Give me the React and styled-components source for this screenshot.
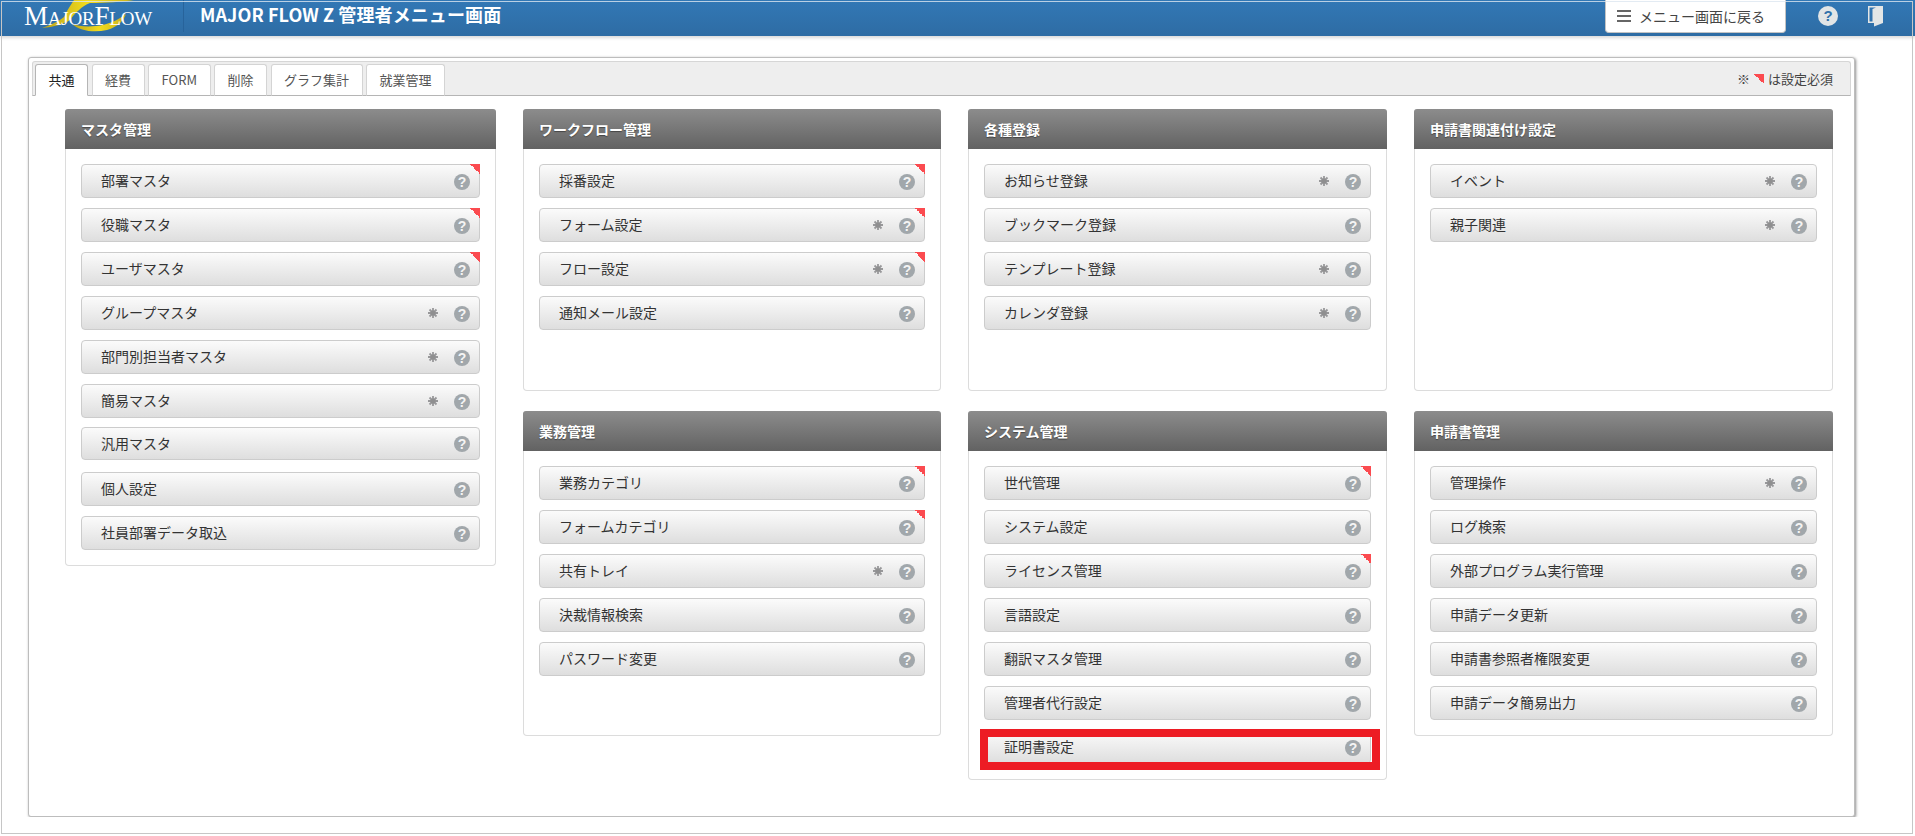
import React from "react";
import styled, { createGlobalStyle } from "styled-components";

const FONT = `"Noto Sans CJK JP", "Noto Sans", sans-serif`;

const columns = [
  [
    {
      title: "マスタ管理",
      items: [
        { name: "部署マスタ", required: true },
        { name: "役職マスタ", required: true },
        { name: "ユーザマスタ", required: true },
        { name: "グループマスタ", star: true },
        { name: "部門別担当者マスタ", star: true },
        { name: "簡易マスタ", star: true },
        { name: "汎用マスタ", tight: true },
        { name: "個人設定" },
        { name: "社員部署データ取込" },
      ],
    },
  ],
  [
    {
      title: "ワークフロー管理",
      minHeight: 282,
      items: [
        { name: "採番設定", required: true },
        { name: "フォーム設定", required: true, star: true },
        { name: "フロー設定", required: true, star: true },
        { name: "通知メール設定" },
      ],
    },
    {
      title: "業務管理",
      minHeight: 325,
      items: [
        { name: "業務カテゴリ", required: true },
        { name: "フォームカテゴリ", required: true },
        { name: "共有トレイ", star: true },
        { name: "決裁情報検索" },
        { name: "パスワード変更" },
      ],
    },
  ],
  [
    {
      title: "各種登録",
      minHeight: 282,
      items: [
        { name: "お知らせ登録", star: true },
        { name: "ブックマーク登録" },
        { name: "テンプレート登録", star: true },
        { name: "カレンダ登録", star: true },
      ],
    },
    {
      title: "システム管理",
      items: [
        { name: "世代管理", required: true },
        { name: "システム設定" },
        { name: "ライセンス管理", required: true },
        { name: "言語設定" },
        { name: "翻訳マスタ管理" },
        { name: "管理者代行設定" },
        { name: "証明書設定", marked: true },
      ],
    },
  ],
  [
    {
      title: "申請書関連付け設定",
      minHeight: 282,
      items: [
        { name: "イベント", star: true },
        { name: "親子関連", star: true },
      ],
    },
    {
      title: "申請書管理",
      items: [
        { name: "管理操作", star: true },
        { name: "ログ検索" },
        { name: "外部プログラム実行管理" },
        { name: "申請データ更新" },
        { name: "申請書参照者権限変更" },
        { name: "申請データ簡易出力" },
      ],
    },
  ],
];

const tabs = ["共通", "経費", "FORM", "削除", "グラフ集計", "就業管理"];

const Logo = () => (
  <LogoWrap>
    <svg width="130" height="36" viewBox="0 0 130 36">
      <defs>
        <linearGradient id="gold" x1="0" y1="0" x2="1" y2="0">
          <stop offset="0" stopColor="#b9a21a" />
          <stop offset="0.5" stopColor="#f2dc1e" />
          <stop offset="1" stopColor="#c9b01c" />
        </linearGradient>
      </defs>
      <path
        d="M52 0 C48 6 44 12 42 17 C36 22 28 25 20 28 C32 27 42 24 48 20 C52 14 60 6 68 3 C84 3 100 2 112 0 Z"
        fill="url(#gold)"
      />
      <path d="M50 24 C58 31 72 33 85 30 C96 27 102 20 104 14 C96 20 86 25 74 26 C64 27 56 26 50 24 Z" fill="url(#gold)" />
    </svg>
    <LogoText>Major<span>Flow</span></LogoText>
  </LogoWrap>
);

const DoorIcon = () => (
  <svg width="15" height="21" viewBox="0 0 15 21">
    <path d="M0 0 H15 V17 L6 20.5 V17 H0 Z M1.5 1.5 V15.5 H4.5 V3 L8 1.5 Z" fill="#e3e6e6" fillRule="evenodd" />
  </svg>
);

const StarIcon = () => (
  <svg width="10" height="10" viewBox="0 0 10 10">
    <g stroke="#98989a" strokeWidth="1.8">
      <path d="M5 0 V10 M0 5 H10 M1.5 1.5 L8.5 8.5 M8.5 1.5 L1.5 8.5" />
    </g>
    <circle cx="5" cy="5" r="2.6" fill="#8f8f90" />
  </svg>
);

const MenuButton = ({ name, required, star, marked, tight }) => (
  <ButtonRow $marked={marked} $tight={tight}>
    <span className="label">{name}</span>
    {star && <StarIcon />}
    <HelpMark>?</HelpMark>
    {required && <Corner />}
  </ButtonRow>
);

const App = () => (
  <>
    <GlobalStyle />
    <TopBar>
      <Logo />
      <Title>MAJOR FLOW Z 管理者メニュー画面</Title>
      <BackButton>
        <Burger />
        メニュー画面に戻る
      </BackButton>
      <TopHelp>?</TopHelp>
      <DoorWrap>
        <DoorIcon />
      </DoorWrap>
    </TopBar>
    <Card>
      <TabBar>
        {tabs.map((tab, i) => (
          <Tab key={tab} $active={i === 0}>
            {tab}
          </Tab>
        ))}
        <Note>
          ※<NoteCorner />は設定必須
        </Note>
      </TabBar>
      <Columns>
        {columns.map((panels, i) => (
          <Column key={i}>
            {panels.map((panel) => (
              <Panel key={panel.title} $minHeight={panel.minHeight}>
                <PanelHead>{panel.title}</PanelHead>
                <PanelBody>
                  {panel.items.map((item) => (
                    <MenuButton key={item.name} {...item} />
                  ))}
                </PanelBody>
              </Panel>
            ))}
          </Column>
        ))}
      </Columns>
    </Card>
    <PageFrame />
  </>
);

const GlobalStyle = createGlobalStyle`
  html, body {
    margin: 0;
    padding: 0;
    background: #fff;
    font-family: ${FONT};
    color: #333;
  }
  * {
    box-sizing: border-box;
  }
`;

const PageFrame = styled.div`
  position: absolute;
  top: 1px;
  left: 1px;
  width: 1912px;
  height: 833px;
  border: 1px solid #c6c6c6;
  border-top-color: rgba(220, 230, 240, 0.8);
  pointer-events: none;
`;

const TopBar = styled.header`
  display: flex;
  align-items: flex-start;
  height: 36px;
  background: linear-gradient(#3278b6, #2e6ca4);
  box-shadow: 0 2px 3px rgba(0, 0, 0, 0.15);
`;

const LogoWrap = styled.div`
  position: relative;
  width: 184px;
  height: 32px;
  padding: 1px 0 0 24px;
  border-right: 1px solid #27639b;
  svg {
    position: absolute;
    top: 0;
    left: 22px;
  }
`;

const LogoText = styled.div`
  position: relative;
  font-family: "Liberation Serif", serif;
  font-variant: small-caps;
  font-size: 27px;
  line-height: 30px;
  letter-spacing: -0.2px;
  color: #fff;
  white-space: nowrap;
`;

const Title = styled.h1`
  margin: 0 0 0 16px;
  font-size: 18px;
  font-weight: 700;
  line-height: 28px;
  letter-spacing: 0.1px;
  color: #fff;
  white-space: nowrap;
`;

const BackButton = styled.div`
  display: flex;
  align-items: center;
  gap: 8px;
  width: 181px;
  height: 33px;
  margin-left: auto;
  padding-left: 11px;
  background: #fff;
  border: 1px solid #c3c3c3;
  border-top: none;
  border-radius: 0 0 4px 4px;
  font-size: 14px;
  color: #444;
`;

const Burger = styled.span`
  width: 14px;
  height: 12px;
  border-top: 2px solid #666;
  border-bottom: 2px solid #666;
  position: relative;
  &::after {
    content: "";
    position: absolute;
    left: 0;
    right: 0;
    top: 3px;
    height: 2px;
    background: #666;
  }
`;

const TopHelp = styled.div`
  width: 20px;
  height: 20px;
  margin: 6px 0 0 32px;
  border-radius: 50%;
  background: #e2e5e6;
  color: #3272ac;
  font-family: "Liberation Sans", sans-serif;
  font-size: 15px;
  font-weight: 700;
  line-height: 20px;
  text-align: center;
`;

const DoorWrap = styled.div`
  width: 15px;
  height: 21px;
  margin: 6px 32px 0 30px;
`;

const Card = styled.main`
  width: 1827px;
  height: 760px;
  margin: 21px 0 0 28px;
  padding: 3px;
  background: #fff;
  border: 1px solid #bdbdbd;
  border-radius: 3px;
  box-shadow: 1px 1px 3px rgba(0, 0, 0, 0.45);
`;

const TabBar = styled.nav`
  display: flex;
  align-items: flex-end;
  gap: 3.5px;
  height: 35px;
  padding-left: 2px;
  background: #eeeeee;
  border: 1px solid #d6d6d6;
  border-bottom-color: #b5b5b5;
  border-radius: 3px 3px 0 0;
`;

const Tab = styled.div`
  position: relative;
  top: 1px;
  height: 32px;
  padding: 0 12.5px;
  background: #fff;
  border: 1px solid ${(p) => (p.$active ? "#b5b5b5" : "#d4d4d4")};
  border-bottom-color: ${(p) => (p.$active ? "#fff" : "#b5b5b5")};
  border-radius: 3px 3px 0 0;
  font-size: 13px;
  line-height: 30px;
  color: ${(p) => (p.$active ? "#222" : "#555")};
`;

const Note = styled.div`
  display: flex;
  align-items: center;
  align-self: center;
  margin-left: auto;
  padding-right: 17px;
  font-size: 13px;
  color: #444;
`;

const NoteCorner = styled.span`
  width: 10px;
  height: 10px;
  margin: 0 4px 0 4px;
  background: linear-gradient(to top right, transparent 50%, #fb4b50 50%);
`;

const Columns = styled.section`
  display: grid;
  grid-template-columns: 431px 418px 419px 419px;
  column-gap: 27px;
  align-items: start;
  padding: 13px 0 0 33px;
`;

const Column = styled.div`
  display: flex;
  flex-direction: column;
  gap: 20px;
`;

const Panel = styled.article`
  min-height: ${(p) => (p.$minHeight ? `${p.$minHeight}px` : "0")};
  background: #fff;
  border: 1px solid #dcdcdc;
  border-top: none;
  border-radius: 4px;
`;

const PanelHead = styled.h2`
  height: 40px;
  margin: 0 -1px;
  padding-left: 16px;
  background: linear-gradient(#8c8c8c, #626262);
  border-radius: 3px 3px 0 0;
  font-size: 14px;
  font-weight: 700;
  line-height: 40px;
  color: #fff;
  text-shadow: 0 1px 1px rgba(0, 0, 0, 0.4);
`;

const PanelBody = styled.div`
  display: flex;
  flex-direction: column;
  gap: 10px;
  padding: 15px;
`;

const ButtonRow = styled.div`
  position: relative;
  display: flex;
  align-items: center;
  gap: 16px;
  height: ${(p) => (p.$tight ? "33px" : "34px")};
  margin: ${(p) => (p.$tight ? "-1px 0 2px" : "0")};
  padding: 0 9px 0 19px;
  background: linear-gradient(#fbfbfb, #dedede);
  border: 1px solid #cccccc;
  border-radius: 4px;
  font-size: 14px;
  color: #333;
  .label {
    flex: 1;
    padding-bottom: 2px;
  }
  ${(p) =>
    p.$marked &&
    `
    &::after {
      content: "";
      position: absolute;
      top: -2px;
      left: -5px;
      right: -10px;
      bottom: -7px;
      border: 8px solid #ed1c24;
    }
  `}
`;

const HelpMark = styled.span`
  width: 16px;
  height: 16px;
  margin-top: 1px;
  border-radius: 50%;
  background: #a1a7ab;
  color: #f4f4f4;
  font-family: "Liberation Sans", sans-serif;
  font-size: 14px;
  font-weight: 700;
  line-height: 16px;
  text-align: center;
`;

const Corner = styled.span`
  position: absolute;
  top: -1px;
  right: -1px;
  width: 10px;
  height: 10px;
  background: linear-gradient(to top right, transparent 50%, #fb4b50 50%);
`;

export default App;
